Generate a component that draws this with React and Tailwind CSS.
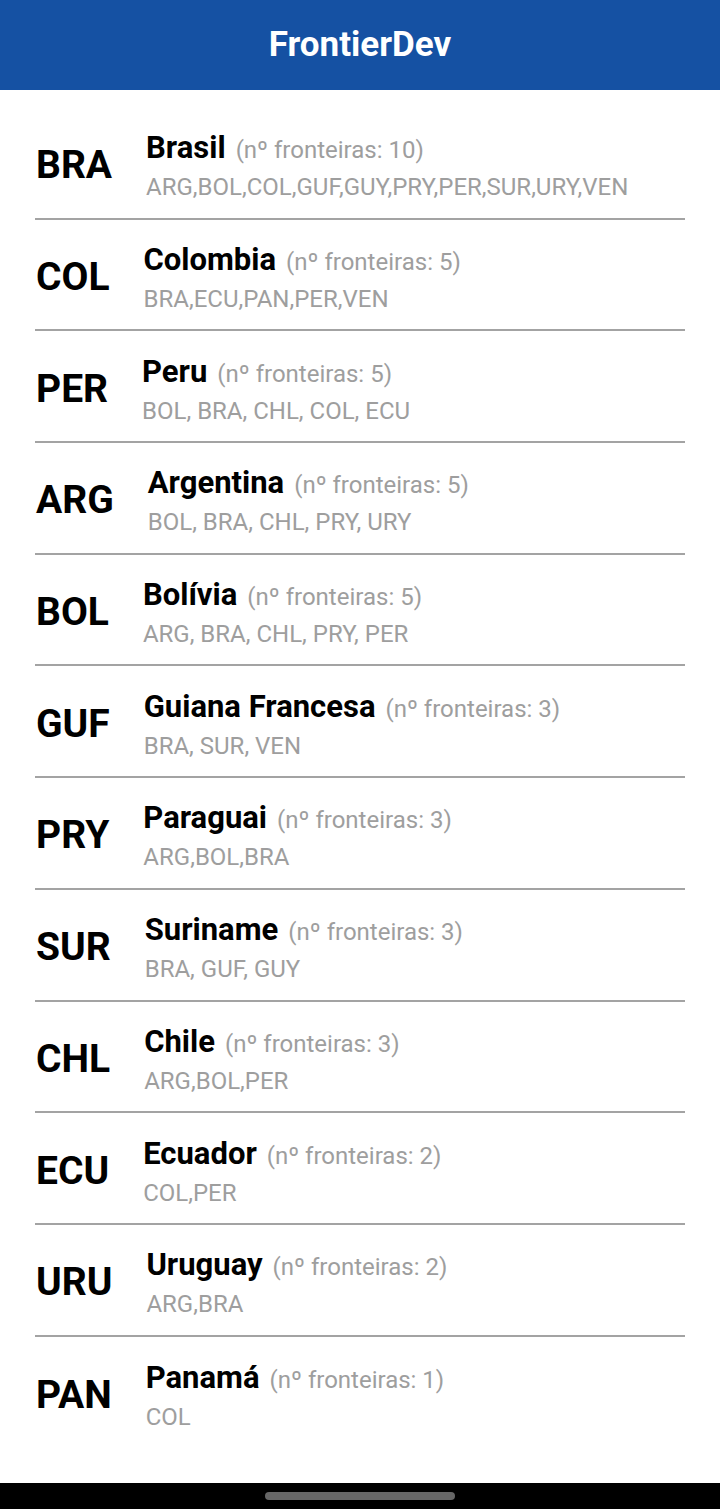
import React from 'react';

const countries = [
  { code: 'BRA', name: 'Brasil', count: 10, borders: 'ARG,BOL,COL,GUF,GUY,PRY,PER,SUR,URY,VEN' },
  { code: 'COL', name: 'Colombia', count: 5, borders: 'BRA,ECU,PAN,PER,VEN' },
  { code: 'PER', name: 'Peru', count: 5, borders: 'BOL, BRA, CHL, COL, ECU' },
  { code: 'ARG', name: 'Argentina', count: 5, borders: 'BOL, BRA, CHL, PRY, URY' },
  { code: 'BOL', name: 'Bolívia', count: 5, borders: 'ARG, BRA, CHL, PRY, PER' },
  { code: 'GUF', name: 'Guiana Francesa', count: 3, borders: 'BRA, SUR, VEN' },
  { code: 'PRY', name: 'Paraguai', count: 3, borders: 'ARG,BOL,BRA' },
  { code: 'SUR', name: 'Suriname', count: 3, borders: 'BRA, GUF, GUY' },
  { code: 'CHL', name: 'Chile', count: 3, borders: 'ARG,BOL,PER' },
  { code: 'ECU', name: 'Ecuador', count: 2, borders: 'COL,PER' },
  { code: 'URU', name: 'Uruguay', count: 2, borders: 'ARG,BRA' },
  { code: 'PAN', name: 'Panamá', count: 1, borders: 'COL' },
];

export default function App() {
  return (
    <div className="w-[720px] h-[1509px] flex flex-col bg-white font-['Roboto',sans-serif] overflow-hidden">
      <header className="h-[90px] bg-[#1551a3] flex items-center justify-center shrink-0">
        <h1 className="text-white font-bold text-[35px] leading-none pb-[2px]">FrontierDev</h1>
      </header>

      <main className="flex-1 pt-[18px] px-[35px]">
        {countries.map((c, i) => (
          <div
            key={c.code}
            className={`h-[111.7px] flex items-center gap-[34px] pt-[6px] pl-[1px] ${
              i < countries.length - 1 ? 'border-b-2 border-[#a3a3a3]' : ''
            }`}
          >
            <div className="text-[39px] font-bold text-black leading-none">{c.code}</div>
            <div className="flex flex-col">
              <div className="leading-[38px] whitespace-nowrap">
                <span className="text-[31px] font-bold text-black">{c.name}</span>
                <span className="text-[24px] text-[#9e9e9e] ml-[10px]">(nº fronteiras: {c.count})</span>
              </div>
              <div className="leading-[30px] text-[24px] text-[#9e9e9e] whitespace-nowrap">{c.borders}</div>
            </div>
          </div>
        ))}
      </main>

      <footer className="h-[26px] bg-black flex items-center justify-center shrink-0">
        <div className="w-[190px] h-[8px] rounded-full bg-[#666666]" />
      </footer>
    </div>
  );
}
